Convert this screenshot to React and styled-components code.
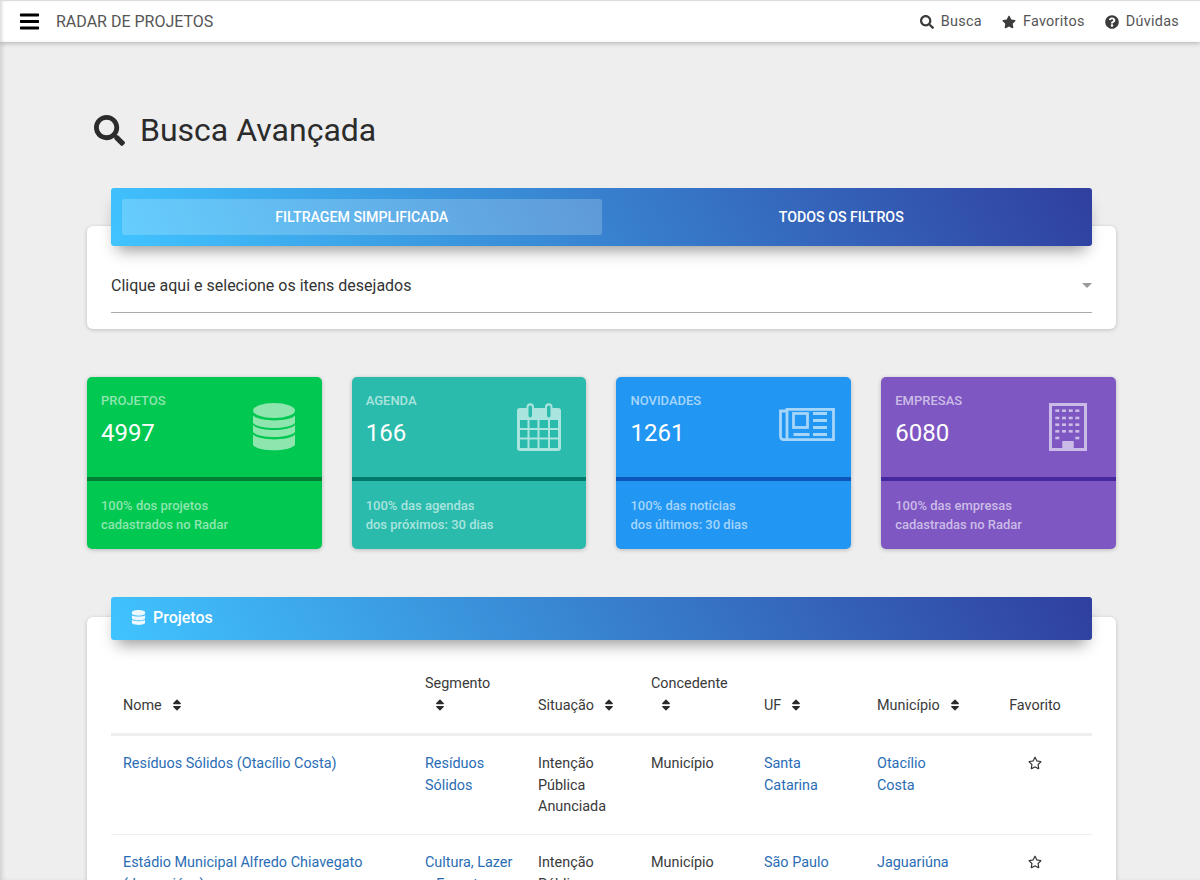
import React from 'react';
import styled, { createGlobalStyle } from 'styled-components';
import {
  FaBars,
  FaSearch,
  FaStar,
  FaRegStar,
  FaQuestionCircle,
  FaDatabase,
  FaSort,
} from 'react-icons/fa';

const GlobalStyle = createGlobalStyle`
  html, body {
    margin: 0;
    height: 100%;
    background: #eee;
    overflow: hidden;
  }
  body {
    font-family: Roboto, 'Liberation Sans', sans-serif;
    color: #333;
  }
  * {
    box-sizing: border-box;
  }
`;

const Shell = styled.div`
  height: 880px;
  overflow: hidden;
  background: #eee;
  box-shadow: inset 4px 0 5px -2px rgba(0, 0, 0, 0.14);
`;

const Navbar = styled.header`
  height: 42px;
  border-top: 1px solid #ddd;
  background: #fff;
  display: flex;
  align-items: center;
  justify-content: space-between;
  padding: 0 21px 0 20px;
  box-shadow: 0 2px 4px rgba(0, 0, 0, 0.2), inset 3px 0 4px -2px rgba(0, 0, 0, 0.2);
`;

const Brand = styled.div`
  display: flex;
  align-items: center;
  gap: 17px;
  font-size: 16px;
  color: #555;
  svg {
    color: #000;
    font-size: 19px;
    transform: scale(1.15, 1.1);
  }
`;

const NavLinks = styled.nav`
  display: flex;
  gap: 20px;
`;

const NavLink = styled.a`
  display: flex;
  align-items: center;
  gap: 7px;
  font-size: 14.4px;
  letter-spacing: 0.3px;
  color: #555;
  svg {
    color: #3c3c3c;
    font-size: 14px;
  }
`;

const Main = styled.main`
  padding: 0 84px 0 87px;
`;

const PageTitle = styled.h1`
  display: flex;
  align-items: center;
  gap: 15px;
  height: 38px;
  margin: 69px 0 77px 7px;
  font-size: 32px;
  font-weight: 400;
  line-height: 38px;
  color: #2b2b2b;
  svg {
    font-size: 31px;
  }
`;

const Panel = styled.section`
  background: #fff;
  border-radius: 6px;
  padding: 0 24px 16px;
  box-shadow: 0 1px 4px rgba(0, 0, 0, 0.2);
`;

const GradientBar = styled.div`
  position: relative;
  border-radius: 3px;
  background: linear-gradient(60deg, #40c4ff, #303f9f);
  box-shadow: 0 10px 16px -6px rgba(0, 0, 0, 0.42);
`;

const TabBar = styled(GradientBar)`
  top: -38px;
  display: grid;
  grid-template-columns: 1fr 1fr;
  height: 58px;
  margin-bottom: -38px;
  padding: 11px;
`;

const Tab = styled.button`
  border: 0;
  border-radius: 2px;
  padding: 0;
  font-family: inherit;
  font-size: 14.2px;
  font-weight: 500;
  color: #fff;
  background: ${(p) => (p.$active ? 'rgba(255, 255, 255, 0.2)' : 'transparent')};
`;

const Select = styled.div`
  display: flex;
  align-items: center;
  justify-content: space-between;
  height: 67px;
  padding-top: 13px;
  border-bottom: 1px solid #aaa;
  font-size: 16px;
  color: #333;
  &::after {
    content: '';
    border-top: 5px solid #999;
    border-left: 5px solid transparent;
    border-right: 5px solid transparent;
  }
`;

const StatsGrid = styled.div`
  display: grid;
  grid-template-columns: repeat(4, 1fr);
  gap: 30px;
  margin: 48px 0 0 -0.1px;
`;

const StatCard = styled.article`
  height: 172px;
  border-radius: 5px;
  background: ${(p) => p.$bg};
  box-shadow: 0 1px 4px rgba(0, 0, 0, 0.22);
  overflow: hidden;
`;

const StatTop = styled.div`
  display: flex;
  justify-content: space-between;
  height: 104px;
  padding: 16px ${(p) => p.$iconInset}px 0 14px;
  border-bottom: 4px solid ${(p) => p.$line};
  svg {
    color: ${(p) => p.$soft};
  }
`;

const StatLabel = styled.div`
  font-size: 13px;
  font-weight: 500;
  line-height: 16px;
  color: ${(p) => p.$soft};
`;

const StatValue = styled.div`
  margin-top: 7px;
  font-size: 24px;
  line-height: 34px;
  color: #fff;
`;

const StatIcon = styled.div`
  padding-top: ${(p) => p.$top}px;
  line-height: 0;
`;

const StatFoot = styled.div`
  padding: 15px 14px 0;
  font-size: 13px;
  font-weight: 500;
  line-height: 19px;
  color: ${(p) => p.$soft};
`;

const ResultsPanel = styled(Panel)`
  margin-top: 68px;
  padding-bottom: 0;
`;

const TitleBar = styled(GradientBar)`
  top: -20px;
  display: flex;
  align-items: center;
  gap: 7px;
  height: 43px;
  margin-bottom: -20px;
  padding: 0 0 2px 20px;
  font-size: 16px;
  font-weight: 500;
  color: #fff;
  svg {
    font-size: 15px;
    opacity: 0.9;
  }
`;

const Table = styled.table`
  width: 981px;
  margin-top: 21px;
  border-collapse: collapse;
  table-layout: fixed;
  font-size: 14.4px;
  line-height: 21.6px;
  color: #3a3a3a;
`;

const HeadCell = styled.th`
  width: ${(p) => p.$width}px;
  padding: 12px 12px 17px;
  border-bottom: 3px solid #eee;
  font-weight: 400;
  text-align: ${(p) => (p.$center ? 'center' : 'left')};
  vertical-align: bottom;
`;

const SortWrap = styled.span`
  display: inline-block;
  width: 25px;
  padding-left: 8px;
  svg {
    font-size: 14px;
    vertical-align: -2px;
    color: #2b2b2b;
  }
`;

const Row = styled.tr`
  border-bottom: 1px solid #eee;
`;

const Cell = styled.td`
  padding: 17px 12px 16.500px;
  vertical-align: top;
  text-align: ${(p) => (p.$center ? 'center' : 'left')};
`;

const CellLink = styled.a`
  color: #2a6db5;
`;

const FavIcon = styled(FaRegStar)`
  font-size: 14px;
  vertical-align: -2px;
  color: #333;
`;

function StackIcon() {
  return (
    <svg width="42" height="48" viewBox="0 0 42 48" fill="currentColor">
      <ellipse cx="21" cy="7.500" rx="21" ry="7.500" />
      <path d="M0 12.500C6 19 36 19 42 12.500V20C36 26.700 6 26.700 0 20Z" />
      <path d="M0 22C6 28.700 36 28.700 42 22V29C36 35.700 6 35.700 0 29Z" />
      <path d="M0 31.500C6 38 36 38 42 31.500V42C36 49 6 49 0 42Z" />
    </svg>
  );
}

function CalendarIcon() {
  return (
    <svg width="44" height="48" viewBox="0 0 44 48" fill="currentColor">
      <path
        fillRule="evenodd"
        d="M3 5h6.500V4a3.500 3.500 0 0 1 7.500 0v1h11V4a3.500 3.500 0 0 1 7.500 0v1H41a3 3 0 0 1 3 3v37a3 3 0 0 1-3 3H3a3 3 0 0 1-3-3V8a3 3 0 0 1 3-3zM11.500 4v9a1.800 1.800 0 0 0 3.500 0V4a1.800 1.800 0 0 0-3.500 0zM30 4v9a1.800 1.800 0 0 0 3.500 0V4a1.800 1.800 0 0 0-3.500 0zM3 17v8h7.500v-8zM12.500 17v8H20.500v-8zM22.500 17v8H31v-8zM33 17v8h8v-8zM3 27v7.500h7.500V27zM12.500 27v7.500H20.500V27zM22.500 27v7.500H31V27zM33 27v7.500h8V27zM3 36.500V45h7.500v-8.500zM12.500 36.500V45H20.500v-8.500zM22.500 36.500V45H31v-8.500zM33 36.500V45h8v-8.500z"
      />
    </svg>
  );
}

function NewsIcon() {
  return (
    <svg width="56" height="33" viewBox="0 0 56 33" fill="none" stroke="currentColor" strokeWidth="2.800">
      <rect x="8" y="1.400" width="46.500" height="30.200" />
      <path d="M8 31.600H4.500a3 3 0 0 1-3-3V3h6.500" />
      <rect x="14.500" y="5.500" width="14" height="14" />
      <path d="M34 5.500h14M34 12.500h14M34 19.500h14M14.500 26.500h16M34 26.500h14" />
    </svg>
  );
}

const windowCols = [8.3, 15, 21.7, 28.3];
const windowRows = [7.7, 15, 21.7, 28.3];

function BuildingIcon() {
  return (
    <svg width="38" height="48" viewBox="0 0 38 48" fill="currentColor">
      <path
        fillRule="evenodd"
        d="M0 0h38v48H0zM3 3v42h10.500v-7h11v7H35V3z"
      />
      {windowRows.map((y) =>
        windowCols.map((x) => <rect key={`${x}-${y}`} x={x - 2} y={y - 1.3} width="4" height="2.600" />)
      )}
      <rect x="6.300" y="33.700" width="4" height="2.600" />
      <rect x="26.300" y="33.700" width="4" height="2.600" />
      <rect x="13.500" y="38" width="11" height="7" />
    </svg>
  );
}

const stats = [
  {
    label: 'PROJETOS',
    value: '4997',
    foot: ['100% dos projetos', 'cadastrados no Radar'],
    bg: '#00c851',
    line: '#007e33',
    soft: '#8ee6ae',
    iconInset: 27,
    iconTop: 10,
    icon: <StackIcon />,
  },
  {
    label: 'AGENDA',
    value: '166',
    foot: ['100% das agendas', 'dos próximos: 30 dias'],
    bg: '#2bbbad',
    line: '#00796b',
    soft: '#aae4de',
    iconInset: 25,
    iconTop: 10,
    icon: <CalendarIcon />,
  },
  {
    label: 'NOVIDADES',
    value: '1261',
    foot: ['100% das notícias', 'dos últimos: 30 dias'],
    bg: '#2196f3',
    line: '#0d56ba',
    soft: '#a6d5fa',
    iconInset: 16,
    iconTop: 15,
    icon: <NewsIcon />,
  },
  {
    label: 'EMPRESAS',
    value: '6080',
    foot: ['100% das empresas', 'cadastradas no Radar'],
    bg: '#7e57c2',
    line: '#4527a0',
    soft: '#cbbce7',
    iconInset: 29,
    iconTop: 10,
    icon: <BuildingIcon />,
  },
];

const columns = [
  { name: 'Nome', width: 302 },
  { name: 'Segmento', width: 113 },
  { name: 'Situação', width: 113 },
  { name: 'Concedente', width: 113 },
  { name: 'UF', width: 113 },
  { name: 'Município', width: 113 },
];

const projects = [
  {
    name: 'Resíduos Sólidos (Otacílio Costa)',
    segment: 'Resíduos Sólidos',
    status: 'Intenção Pública Anunciada',
    grantor: 'Município',
    state: 'Santa Catarina',
    city: 'Otacílio Costa',
  },
  {
    name: 'Estádio Municipal Alfredo Chiavegato (Jaguariúna)',
    segment: 'Cultura, Lazer e Esportes',
    status: 'Intenção Pública Anunciada',
    grantor: 'Município',
    state: 'São Paulo',
    city: 'Jaguariúna',
  },
];

export default function App() {
  return (
    <Shell>
      <GlobalStyle />
      <Navbar>
        <Brand>
          <FaBars />
          RADAR DE PROJETOS
        </Brand>
        <NavLinks>
          <NavLink><FaSearch /> Busca</NavLink>
          <NavLink><FaStar /> Favoritos</NavLink>
          <NavLink><FaQuestionCircle /> Dúvidas</NavLink>
        </NavLinks>
      </Navbar>
      <Main>
        <PageTitle>
          <FaSearch />
          Busca Avançada
        </PageTitle>

        <Panel>
          <TabBar>
            <Tab $active>FILTRAGEM SIMPLIFICADA</Tab>
            <Tab>TODOS OS FILTROS</Tab>
          </TabBar>
          <Select>Clique aqui e selecione os itens desejados</Select>
        </Panel>

        <StatsGrid>
          {stats.map((s) => (
            <StatCard key={s.label} $bg={s.bg}>
              <StatTop $line={s.line} $soft={s.soft} $iconInset={s.iconInset}>
                <div>
                  <StatLabel $soft={s.soft}>{s.label}</StatLabel>
                  <StatValue>{s.value}</StatValue>
                </div>
                <StatIcon $top={s.iconTop}>{s.icon}</StatIcon>
              </StatTop>
              <StatFoot $soft={s.soft}>
                {s.foot[0]}
                <br />
                {s.foot[1]}
              </StatFoot>
            </StatCard>
          ))}
        </StatsGrid>

        <ResultsPanel>
          <TitleBar>
            <FaDatabase />
            Projetos
          </TitleBar>
          <Table>
            <thead>
              <tr>
                {columns.map((c) => (
                  <HeadCell key={c.name} $width={c.width}>
                    {c.name}
                    <wbr />
                    <SortWrap><FaSort /></SortWrap>
                  </HeadCell>
                ))}
                <HeadCell $width={114} $center>Favorito</HeadCell>
              </tr>
            </thead>
            <tbody>
              {projects.map((p) => (
                <Row key={p.name}>
                  <Cell><CellLink>{p.name}</CellLink></Cell>
                  <Cell><CellLink>{p.segment}</CellLink></Cell>
                  <Cell>{p.status}</Cell>
                  <Cell>{p.grantor}</Cell>
                  <Cell><CellLink>{p.state}</CellLink></Cell>
                  <Cell><CellLink>{p.city}</CellLink></Cell>
                  <Cell $center><FavIcon /></Cell>
                </Row>
              ))}
            </tbody>
          </Table>
        </ResultsPanel>
      </Main>
    </Shell>
  );
}
